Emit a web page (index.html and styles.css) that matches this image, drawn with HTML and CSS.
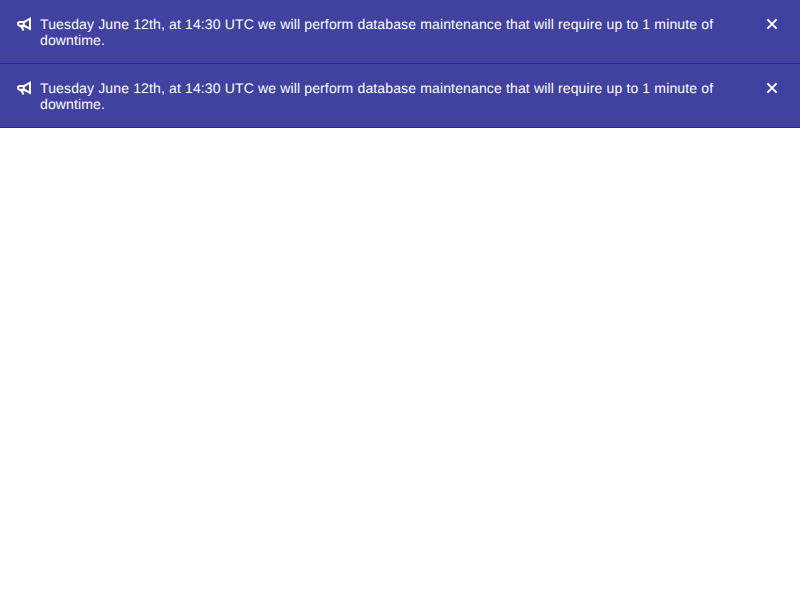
FILE: index.html
```
<!DOCTYPE html>
<html lang="en">
<head>
<meta charset="utf-8">
<title>Broadcast messages</title>
<link rel="stylesheet" href="styles.css">
</head>
<body>
<svg width="0" height="0" class="sprite" aria-hidden="true">
  <symbol id="bullhorn" viewBox="0 0 16 16">
    <path fill="currentColor" fill-rule="evenodd" d="M15 1v13.6l-6.4-3.4H7l1.4 2.9-1.8.9-1.9-3.8L3.2 11 3 10.4A2.7 2.7 0 0 1 1 7.8 2.8 2.8 0 0 1 3.8 5h4.1zM13 4.3 8.8 7v1.7l4.2 2.5zM6.8 7H3.9a.9.9 0 0 0 0 1.8h2.9z"/>
  </symbol>
  <symbol id="close" viewBox="0 0 16 16">
    <path d="m3.4 3.4 9.2 9.2m0-9.2-9.2 9.2" fill="none" stroke="currentColor" stroke-width="2"/>
  </symbol>
</svg>
<div class="broadcast" role="alert">
  <svg class="icon"><use href="#bullhorn"/></svg>
  <p class="message">Tuesday June 12th, at 14:30 UTC we will perform database maintenance that will require up to 1 minute of downtime.</p>
  <button class="dismiss" aria-label="Dismiss"><svg class="icon"><use href="#close"/></svg></button>
</div>
<div class="broadcast" role="alert">
  <svg class="icon"><use href="#bullhorn"/></svg>
  <p class="message">Tuesday June 12th, at 14:30 UTC we will perform database maintenance that will require up to 1 minute of downtime.</p>
  <button class="dismiss" aria-label="Dismiss"><svg class="icon"><use href="#close"/></svg></button>
</div>
</body>
</html>
```
FILE: styles.css
```
* { box-sizing: border-box; }
body {
  margin: 0;
  background: #fff;
  font: 14px/16px "Liberation Sans", Arial, sans-serif;
}
.sprite { display: none; }
.broadcast {
  display: flex;
  align-items: flex-start;
  height: 64px;
  padding: 16px 12px 0 16px;
  color: #fff;
  background: #41419f;
  border-bottom: 1px solid #303030;
}
.icon {
  display: block;
  flex: none;
  width: 16px;
  height: 16px;
}
.message {
  flex: 1;
  margin: 0 24px 0 8px;
  letter-spacing: 0.01em;
  text-rendering: geometricPrecision;
}
.dismiss {
  flex: none;
  margin: -8px 0 0;
  padding: 8px;
  border: 0;
  color: inherit;
  background: none;
}
```
